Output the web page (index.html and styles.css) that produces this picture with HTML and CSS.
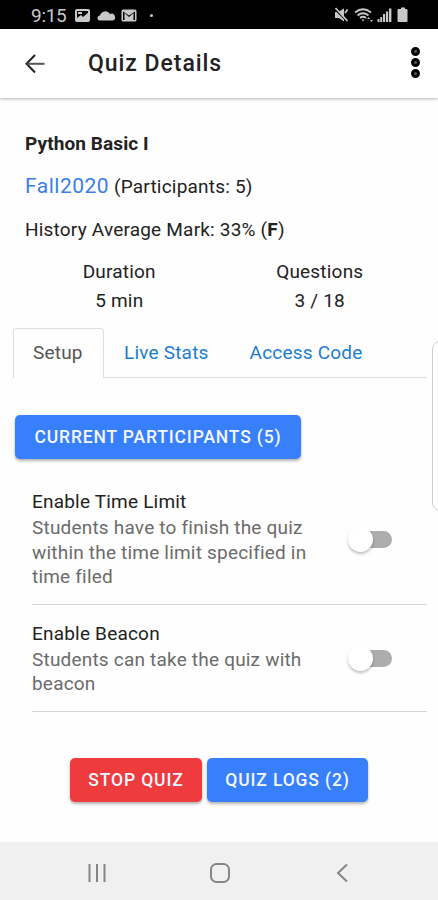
FILE: index.html
```html
<!DOCTYPE html>
<html lang="en">
<head>
    <meta charset="UTF-8">
    <meta name="viewport" content="width=device-width, initial-scale=1">
    <title>Quiz Details</title>
    <link rel="stylesheet" href="styles.css">
</head>
<body>
    <div class="status-bar">
        <span class="clock">9:15</span>
        <svg class="status-left" width="75" height="18" viewBox="0 0 75 18" fill="#c8c8c8">
            <path fill-rule="evenodd" d="M2 2h11a2 2 0 0 1 2 2v9a2 2 0 0 1-2 2H2a2 2 0 0 1-2-2V4a2 2 0 0 1 2-2zM2 4v7l4-3 2 2 5-4V4z"/>
            <path d="M3 5h4v2H3zM2 13l4-4 2 2 5-5v7z"/>
            <path d="M25 13.500a2.500 2.500 0 0 1 0-5 5.500 5.500 0 0 1 10-1.500 3.500 3.500 0 0 1 3 6.500z"/>
            <path fill-rule="evenodd" d="M48 2.500h12a1.500 1.500 0 0 1 1.500 1.500v9a1.500 1.500 0 0 1-1.500 1.500H48a1.500 1.500 0 0 1-1.500-1.500V4a1.500 1.500 0 0 1 1.500-1.500zM48 4.500V13h1.500V6l4.500 4 4.500-4v7H60V4.500l-6 4z"/>
        </svg>
        <span class="more-dot"></span>
        <svg class="status-right" width="76" height="18" viewBox="0 0 76 18" fill="#c8c8c8">
            <path d="M1 5h3l6-3.500v13L5 11H1z"/>
            <path d="M1 2l12 12" stroke="#000" stroke-width="2"/>
            <path d="M1.500 1l12 13M11 6l2.500-3.500" stroke="#c8c8c8" stroke-width="1.800"/>
            <g fill="none" stroke="#c8c8c8" stroke-width="1.700">
                <path d="M21 5.500q8-6.500 16 0M23.500 8.500q5.500-4.500 11 0M26 11q3-2.500 6 0"/>
            </g>
            <path d="M27.500 12.500h3L29 14.500zM33 12l1.500-2 1.500 2zM36 13l1.500 2 1.500-2z"/>
            <path d="M43.500 12h2v3h-2zM46.200 10h2v5h-2zM49 7h2.200v8H49zM52 4.500h2.200V15H52zM55 1.500h2.400V15H55z"/>
            <path d="M64.500 2H67V.500h4V2h1.500a1 1 0 0 1 1 1v11a1 1 0 0 1-1 1h-8a1 1 0 0 1-1-1V3a1 1 0 0 1 1-1z"/>
        </svg>
    </div>

    <header class="toolbar">
        <svg class="back" width="20" height="20" viewBox="0 0 20 20" fill="none" stroke="#222" stroke-width="2">
            <path d="M10 1L1.500 9.800 10 18.500"/>
            <path d="M2 9.800h17.500" stroke="#555"/>
        </svg>
        <h1>Quiz Details</h1>
        <div class="menu-dots"><i></i><i></i><i></i></div>
    </header>

    <main>
        <section class="summary">
            <h2>Python Basic I</h2>
            <p><a href="#" class="group">Fall2020</a> (Participants: 5)</p>
            <p>History Average Mark: 33% (<b>F</b>)</p>
        </section>

        <div class="facts">
            <div><span>Duration</span><span>5 min</span></div>
            <div><span>Questions</span><span>3 / 18</span></div>
        </div>

        <nav class="tabs">
            <a href="#" class="active">Setup</a>
            <a href="#">Live Stats</a>
            <a href="#">Access Code</a>
        </nav>

        <button class="btn participants">CURRENT PARTICIPANTS (5)</button>

        <div class="option">
            <div class="option-text">
                <h3>Enable Time Limit</h3>
                <p>Students have to finish the quiz within the time limit specified in time filed</p>
            </div>
            <span class="toggle" role="switch" aria-checked="false"></span>
        </div>
        <div class="option beacon">
            <div class="option-text">
                <h3>Enable Beacon</h3>
                <p>Students can take the quiz with beacon</p>
            </div>
            <span class="toggle" role="switch" aria-checked="false"></span>
        </div>

        <div class="actions">
            <button class="btn stop">STOP QUIZ</button>
            <button class="btn logs">QUIZ LOGS (2)</button>
        </div>
    </main>

    <div class="edge-handle"></div>

    <footer class="system-nav">
        <svg width="20" height="20" viewBox="0 0 20 20" stroke="#858585" stroke-width="2">
            <path d="M2.500 1v18M10 1v18M17.500 1v18"/>
        </svg>
        <svg width="22" height="22" viewBox="0 0 22 22" fill="none" stroke="#858585" stroke-width="2">
            <rect x="2" y="2" width="18" height="18" rx="5.500"/>
        </svg>
        <svg width="20" height="20" viewBox="0 0 20 20" fill="none" stroke="#858585" stroke-width="2">
            <path d="M15 1.500L6 10l9 8.500"/>
        </svg>
    </footer>
</body>
</html>
```

FILE: styles.css
```css
* {
    box-sizing: border-box;
}

body {
    font-family: Roboto, sans-serif;
    margin: 0;
    height: 900px;
    display: flex;
    flex-direction: column;
    position: relative;
    overflow: hidden;
    background-color: #fefefe;
    color: #222222;
    font-size: 19px;
    letter-spacing: 0.2px;
}

h1, h2, h3, p {
    margin: 0;
    font-weight: 400;
}

a {
    text-decoration: none;
}

.status-bar {
    height: 29px;
    flex: none;
    display: flex;
    align-items: center;
    background-color: #000000;
    color: #c8c8c8;
    padding: 2px 28px 0 31px;
}

.clock {
    width: 44px;
    font-size: 19px;
    letter-spacing: -0.3px;
}

.more-dot {
    width: 3px;
    height: 3px;
    border-radius: 50%;
    background-color: #c8c8c8;
}

.status-right {
    margin-left: auto;
}

.toolbar {
    height: 69px;
    flex: none;
    display: flex;
    align-items: center;
    padding: 0 18px 0 25px;
    background-color: #ffffff;
    box-shadow: 0 1px 3px rgba(0, 0, 0, 0.3);
}

.toolbar h1 {
    margin-left: 43px;
    font-size: 23px;
    font-weight: 500;
    letter-spacing: 0.95px;
}

.menu-dots {
    margin: -3px 0 0 auto;
    display: flex;
    flex-direction: column;
    gap: 2px;
}

.menu-dots i {
    width: 9px;
    height: 9px;
    border-radius: 50%;
    border: 3px solid #050505;
    background-color: #555555;
}

main {
    flex: 1;
    padding: 24px 11px 0 13px;
}

.summary {
    padding-left: 12px;
    line-height: 43px;
}

.summary h2 {
    font-size: 19px;
    font-weight: 700;
    letter-spacing: 0.1px;
}

.summary p {
    height: 43px;
}

.group {
    color: #3b7ee8;
    font-size: 21px;
    letter-spacing: 0.5px;
}

.facts {
    display: grid;
    grid-template-columns: 1fr 1fr;
    text-align: center;
    line-height: 29px;
    padding: 6px 7px 0 6px;
}

.facts span {
    display: block;
}

.tabs {
    display: flex;
    height: 50px;
    margin-top: 13px;
    border-bottom: 1px solid #dedede;
}

.tabs a {
    line-height: 49px;
    padding: 0 21px 0 20px;
    color: #1c7cd0;
}

.tabs .active {
    height: 50px;
    width: 91px;
    padding: 0 19px;
    line-height: 48px;
    border: 1px solid #dedede;
    border-bottom: 0;
    border-radius: 4px 4px 0 0;
    background-color: #fefefe;
    color: #555555;
}

.btn {
    height: 44px;
    border: 0;
    border-radius: 5px;
    padding: 0 0 1px;
    background-color: #387ffc;
    color: #f4f8ff;
    font-family: inherit;
    font-size: 17.5px;
    font-weight: 500;
    letter-spacing: 0.85px;
    box-shadow: 0 2px 3px rgba(0, 0, 0, 0.3);
}

.participants {
    display: block;
    width: 286px;
    margin: 37px 0 0 2px;
}

.option {
    display: flex;
    align-items: center;
    height: 131px;
    margin: 15px 0 0 19px;
    border-bottom: 1px solid #d4d4d4;
}

.option-text {
    width: 290px;
    line-height: 24.5px;
}

.option-text h3 {
    font-size: 19px;
    line-height: 29px;
    margin-top: -1px;
}

.option-text p {
    color: #6b6b6b;
}

.beacon {
    height: 107px;
    margin-top: 0;
}

.toggle {
    position: relative;
    width: 41px;
    height: 17px;
    margin-left: 29px;
    border-radius: 9px;
    background-color: #adadad;
}

.toggle::before {
    content: "";
    position: absolute;
    left: -3px;
    top: -4px;
    width: 25px;
    height: 25px;
    border-radius: 50%;
    background-color: #ffffff;
    box-shadow: 0 2px 3px rgba(0, 0, 0, 0.25);
}

.actions {
    display: flex;
    gap: 5px;
    margin: 46px 0 0 57px;
}

.stop {
    width: 132px;
    background-color: #ef3b3e;
}

.logs {
    width: 161px;
}

/* panel handle that peeks in from the right side */
.edge-handle {
    position: absolute;
    top: 341px;
    right: -14px;
    width: 20px;
    height: 170px;
    border: 1px solid #cfcfcf;
    border-radius: 8px;
    background-color: #ffffff;
}

.system-nav {
    height: 58px;
    flex: none;
    display: flex;
    align-items: center;
    justify-content: space-between;
    padding: 3px 86px 0 87px;
    background-color: #f0f0f0;
}
```
